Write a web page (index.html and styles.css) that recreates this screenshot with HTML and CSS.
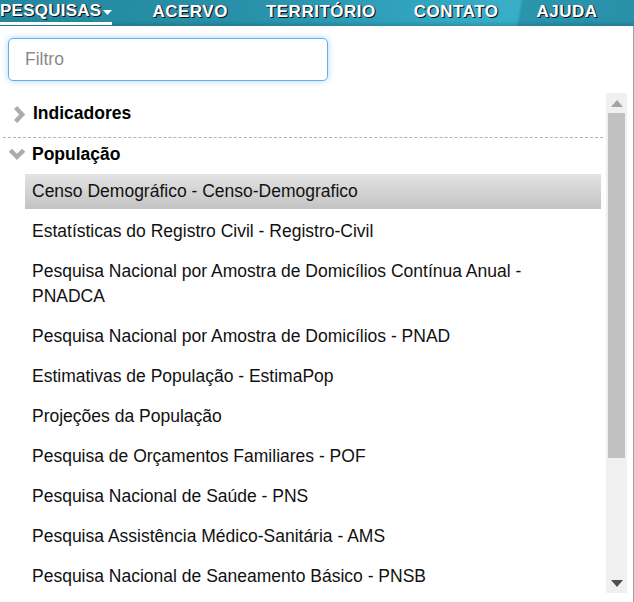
FILE: index.html
```html
<!DOCTYPE html>
<html lang="pt">
<head>
<meta charset="utf-8">
<link rel="stylesheet" href="styles.css">
</head>
<body>
<nav class="topnav">
  <a class="nav-item active">PESQUISAS<svg class="caret" width="9" height="5" viewBox="0 0 9 5"><path d="M0 0H9L4.5 5Z" fill="#fff"/></svg></a>
  <a class="nav-item">ACERVO</a>
  <a class="nav-item">TERRITÓRIO</a>
  <a class="nav-item">CONTATO</a>
  <a class="nav-item">AJUDA</a>
</nav>
<main class="panel">
  <div class="filter-wrap">
    <input class="filter" type="text" placeholder="Filtro">
  </div>
  <div class="tree-area">
    <div class="tree">
      <div class="group closed">
        <svg class="chev" width="12" height="17" viewBox="0 0 12 17"><path d="M2.6 1.6L9.2 8.5L2.6 15.4" fill="none" stroke="#acacac" stroke-width="4.4" stroke-linejoin="miter"/></svg>
        <span>Indicadores</span>
      </div>
      <div class="group open">
        <svg class="chev" width="16" height="13" viewBox="0 0 16 13"><path d="M1.4 2.2L8 8.8L14.6 2.2" fill="none" stroke="#acacac" stroke-width="4.4" stroke-linejoin="miter"/></svg>
        <span>População</span>
      </div>
      <ul class="items">
        <li class="item selected">Censo Demográfico - Censo-Demografico</li>
        <li class="item">Estatísticas do Registro Civil - Registro-Civil</li>
        <li class="item">Pesquisa Nacional por Amostra de Domicílios Contínua Anual - PNADCA</li>
        <li class="item">Pesquisa Nacional por Amostra de Domicílios - PNAD</li>
        <li class="item">Estimativas de População - EstimaPop</li>
        <li class="item">Projeções da População</li>
        <li class="item">Pesquisa de Orçamentos Familiares - POF</li>
        <li class="item">Pesquisa Nacional de Saúde - PNS</li>
        <li class="item">Pesquisa Assistência Médico-Sanitária - AMS</li>
        <li class="item">Pesquisa Nacional de Saneamento Básico - PNSB</li>
      </ul>
    </div>
    <div class="scrollbar">
      <div class="sb-btn"><svg width="12" height="7" viewBox="0 0 12 7"><path d="M0 7L6 0L12 7Z" fill="#a3a3a3"/></svg></div>
      <div class="sb-track"><div class="sb-thumb"></div></div>
      <div class="sb-btn"><svg width="12" height="7" viewBox="0 0 12 7"><path d="M0 0L6 7L12 0Z" fill="#505050"/></svg></div>
    </div>
  </div>
</main>
</body>
</html>
```

FILE: styles.css
```css
* { box-sizing: border-box; }
html, body { margin: 0; padding: 0; background: #fff; }
body {
  width: 634px;
  height: 602px;
  overflow: hidden;
  font-family: "Liberation Sans", Arial, sans-serif;
  color: #111;
}
.topnav {
  height: 26px;
  display: flex;
  align-items: flex-start;
  background:
    linear-gradient(to bottom, rgba(0,0,0,0) 80%, rgba(0,0,0,0.14) 100%),
    linear-gradient(100deg, #24869e 0%, #2892aa 40%, #31a4bf 66%, #37aec8 78%, #37adc7 81.5%, #2a95ad 82%, #2891a9 100%);
}
.nav-item {
  display: flex;
  align-items: center;
  height: 26px;
  padding-bottom: 3px;
  font-size: 17px;
  font-weight: bold;
  color: #fff;
  text-shadow: 1px 1px 0 #111, 1px 0 0 #333;
  letter-spacing: 0.5px;
  margin-right: 38px;
  cursor: pointer;
}
.nav-item.active {
  padding-left: 0;
  letter-spacing: 0.25px;
  border-bottom: 3px solid #fff;
  padding-bottom: 0;
  height: 25px;
  margin-right: 40px;
}
.caret { margin-left: 2px; margin-top: 2px; }
.panel {
  height: 576px;
  border-right: 1px solid #a0a0a0;
}
.filter-wrap {
  padding: 12px 0 0 8px;
}
.filter {
  display: block;
  width: 320px;
  height: 43px;
  border: 1px solid #66afe9;
  border-radius: 5px;
  box-shadow: 0 0 6px rgba(102, 175, 233, 0.55);
  padding: 0 0 0 16px;
  font-family: "Liberation Sans", Arial, sans-serif;
  font-size: 17.5px;
  color: #333;
  outline: none;
}
.filter::placeholder { color: #8a8a8a; }
.tree-area {
  margin-top: 12px;
  height: 500px;
  display: flex;
  gap: 3px;
  padding-left: 3px;
}
.tree {
  width: 600px;
  overflow: hidden;
}
.group {
  display: flex;
  align-items: center;
  font-size: 17.5px;
  font-weight: bold;
  color: #000;
  line-height: 24px;
}
.group.closed {
  height: 45px;
  padding-bottom: 4px;
  padding-left: 10px;
  border-bottom: 1px dashed #b4b4b4;
}
.group.closed .chev { margin-right: 8px; margin-top: 2px; }
.group.open {
  height: 36px;
  padding-left: 6px;
  padding-bottom: 4px;
}
.group.open .chev { margin-right: 7px; margin-top: 1px; }
.items {
  list-style: none;
  margin: 0;
  padding: 0 2px 0 22px;
}
.item {
  padding: 5px 7px;
  margin-bottom: 5px;
  font-size: 17.5px;
  line-height: 25px;
  color: #111;
}
.item.selected {
  background: linear-gradient(to bottom, #e3e3e3, #c3c3c3);
}
.scrollbar {
  width: 21px;
  height: 500px;
  background: #f0f0f0;
  display: flex;
  flex-direction: column;
}
.sb-btn {
  height: 20px;
  display: flex;
  align-items: center;
  justify-content: center;
}
.sb-track {
  flex: 1;
  padding: 0 2px 0 2px;
}
.sb-thumb {
  height: 345px;
  background: #c1c1c1;
}
```
